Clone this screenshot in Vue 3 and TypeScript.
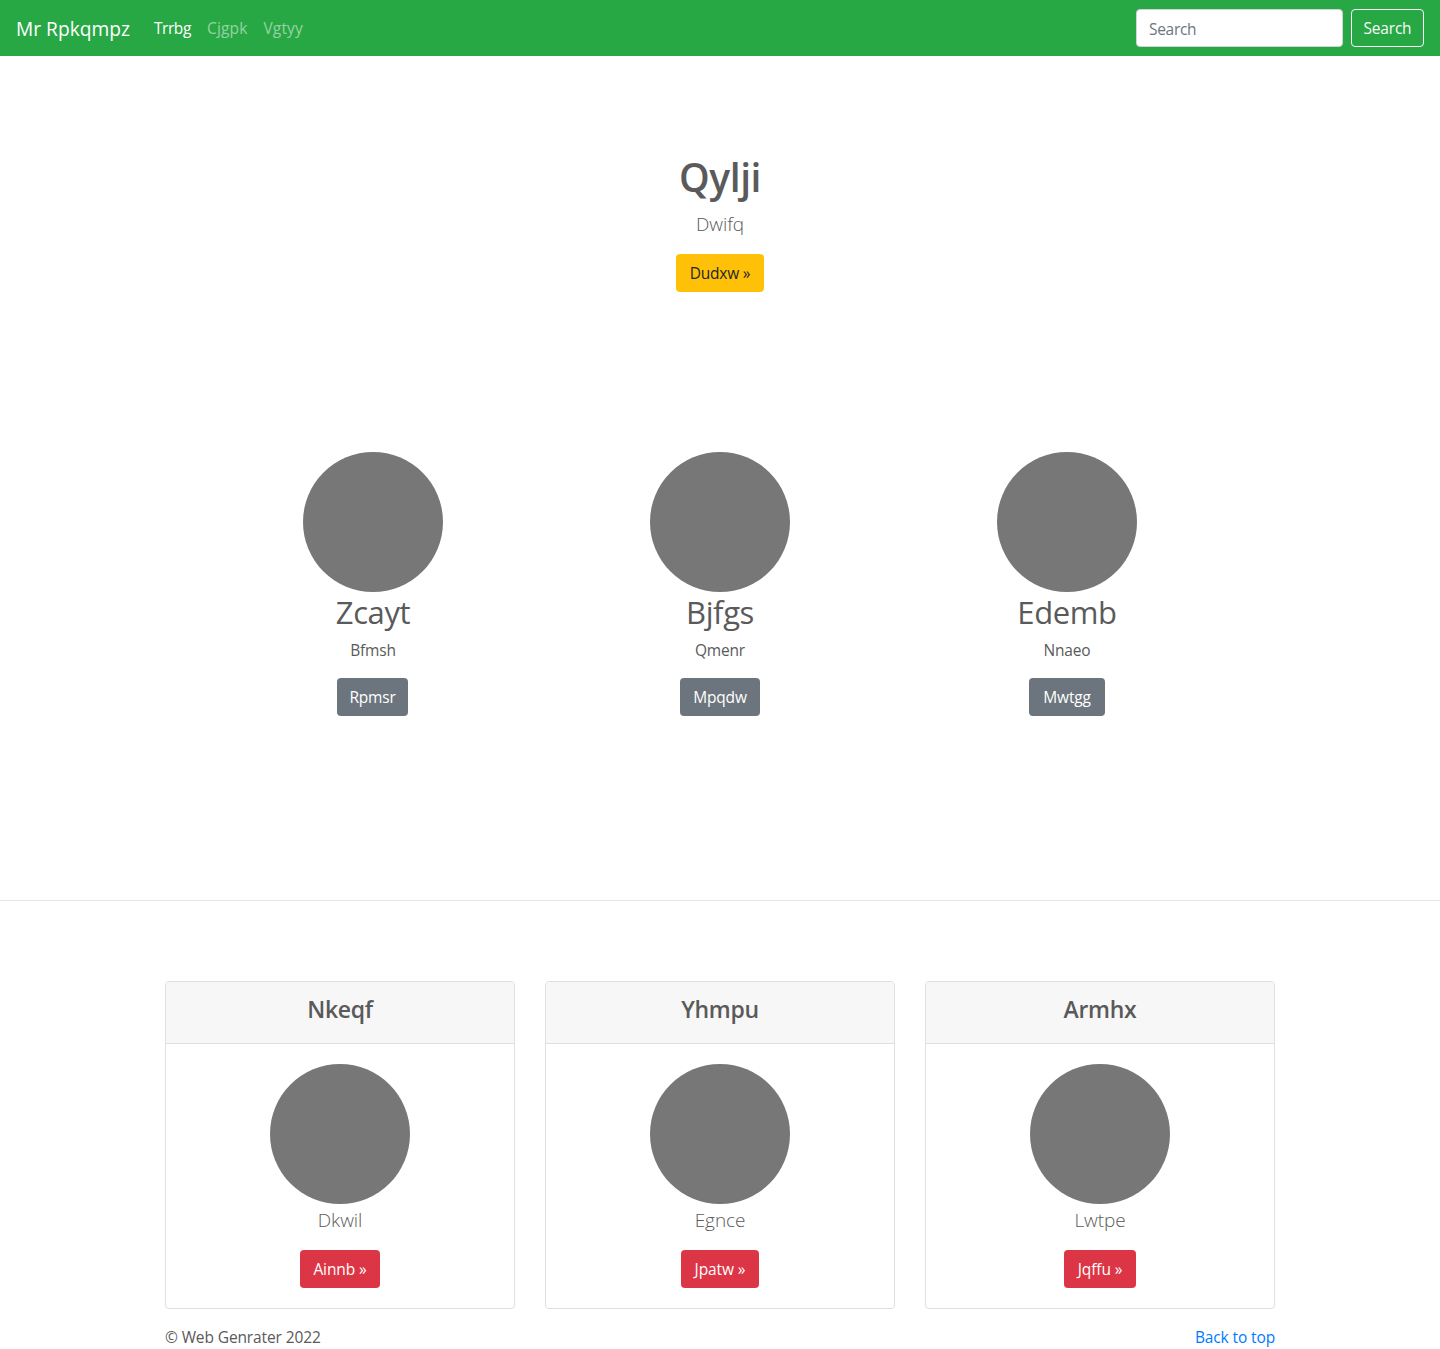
<script setup lang="ts">
interface Item {
  title: string
  text: string
  action: string
  width: number
}

const features: Item[] = [
  { title: 'Zcayt', text: 'Bfmsh', action: 'Rpmsr', width: 71 },
  { title: 'Bjfgs', text: 'Qmenr', action: 'Mpqdw', width: 80 },
  { title: 'Edemb', text: 'Nnaeo', action: 'Mwtgg', width: 76 },
]

const cards: Item[] = [
  { title: 'Nkeqf', text: 'Dkwil', action: 'Ainnb »', width: 80 },
  { title: 'Yhmpu', text: 'Egnce', action: 'Jpatw »', width: 78 },
  { title: 'Armhx', text: 'Lwtpe', action: 'Jqffu »', width: 72 },
]
</script>

<template>
  <div class="page">
    <nav class="navbar">
      <a class="brand">Mr Rpkqmpz</a>
      <ul class="links">
        <li class="active">Trrbg</li>
        <li>Cjgpk</li>
        <li>Vgtyy</li>
      </ul>
      <form class="search" @submit.prevent>
        <input type="text" placeholder="Search" aria-label="Search" />
        <button class="btn outline" type="submit">Search</button>
      </form>
    </nav>

    <section class="hero">
      <h1>Qylji</h1>
      <p class="lead">Dwifq</p>
      <a class="btn warning">Dudxw »</a>
    </section>

    <section class="features">
      <div v-for="f in features" :key="f.title" class="feature">
        <div class="circle"></div>
        <h2>{{ f.title }}</h2>
        <p>{{ f.text }}</p>
        <a class="btn secondary" :style="{ width: f.width + 'px' }">{{ f.action }}</a>
      </div>
    </section>

    <hr />

    <section class="cards">
      <article v-for="c in cards" :key="c.title" class="card">
        <header><h4>{{ c.title }}</h4></header>
        <div class="body">
          <div class="circle"></div>
          <p class="lead">{{ c.text }}</p>
          <a class="btn danger" :style="{ width: c.width + 'px' }">{{ c.action }}</a>
        </div>
      </article>
    </section>

    <footer class="footer">
      <span class="copy">© Web Genrater 2022</span>
      <a class="top">Back to top</a>
    </footer>
  </div>
</template>

<style>
body {
  margin: 0;
  background: #fff;
}
</style>

<style scoped>
* {
  box-sizing: border-box;
}
.page {
  height: 1349px;
  overflow: hidden;
  font-family: 'Segoe UI', 'Open Sans', 'Noto Sans', sans-serif;
  font-size: 15.5px;
  line-height: 24px;
  letter-spacing: -0.2px;
  color: #5a5a5a;
}
h1,
h2,
h4,
p,
ul {
  margin: 0;
  padding: 0;
}
.navbar {
  display: flex;
  align-items: center;
  height: 56px;
  padding: 0 16px;
  background: #28a745;
  color: #fff;
}
.brand {
  width: 114px;
  margin-right: 16px;
  padding-top: 1px;
  font-size: 19.2px;
  line-height: 30px;
  letter-spacing: 0;
  white-space: nowrap;
}
.links {
  display: flex;
  list-style: none;
  color: rgba(255, 255, 255, 0.5);
}
.links li {
  padding: 0 8px;
  letter-spacing: 0.15px;
}
.links .active {
  width: 53px;
  letter-spacing: -0.45px;
  color: #fff;
}
.search {
  display: flex;
  gap: 8px;
  margin-left: auto;
}
.search input {
  width: 207px;
  height: 38px;
  padding: 7px 12px 5px;
  border: 1px solid #ced4da;
  border-radius: 4px;
  background: #fff;
  font: inherit;
  letter-spacing: -0.3px;
}
.search input::placeholder {
  color: #6c757d;
  opacity: 1;
}
.btn {
  display: flex;
  justify-content: center;
  align-items: center;
  height: 38px;
  border: 0;
  border-radius: 4px;
  font: inherit;
  letter-spacing: inherit;
  color: #fff;
  white-space: nowrap;
}
.outline {
  width: 73px;
  padding: 0;
  border: 1px solid #f8f9fa;
  background: transparent;
  color: #f8f9fa;
}
.warning {
  width: 88px;
  background: #ffc107;
  color: #212529;
}
.secondary {
  background: #6c757d;
}
.danger {
  background: #dc3545;
  letter-spacing: -0.1px;
}
.hero {
  display: flex;
  flex-direction: column;
  align-items: center;
  height: 396px;
  padding-top: 96px;
}
h1 {
  height: 48px;
  margin-bottom: 8px;
  font-size: 39px;
  font-weight: 600;
  line-height: 50px;
  letter-spacing: -0.4px;
}
.lead {
  height: 30px;
  margin-bottom: 16px;
  font-size: 19px;
  font-weight: 300;
  line-height: 32px;
  letter-spacing: -0.1px;
}
.features {
  display: flex;
  width: 1041px;
  height: 448px;
  margin: 0 auto;
}
.feature {
  display: flex;
  flex: 1;
  flex-direction: column;
  align-items: center;
}
.feature:first-child .btn {
  margin-right: 1px;
}
.circle {
  flex: none;
  width: 140px;
  height: 140px;
  border-radius: 50%;
  background: #777;
}
h2 {
  height: 38.4px;
  margin-bottom: 8px;
  font-size: 31px;
  font-weight: 400;
  line-height: 40px;
  letter-spacing: -0.4px;
}
.feature p {
  height: 24px;
  margin-bottom: 16px;
}
hr {
  height: 1px;
  margin: 0 0 80px;
  border: 0;
  background: rgba(0, 0, 0, 0.1);
}
.cards {
  display: flex;
  gap: 30px;
  width: 1110px;
  margin: 0 auto 16px;
}
.card {
  flex: 1;
  height: 328px;
  border: 1px solid #dfdfdf;
  border-radius: 4px;
}
.card header {
  height: 62px;
  padding-top: 12px;
  border-bottom: 1px solid #dfdfdf;
  border-radius: 3px 3px 0 0;
  background: #f7f7f7;
  text-align: center;
}
h4 {
  font-size: 23px;
  font-weight: 600;
  line-height: 30px;
  letter-spacing: -0.3px;
}
.body {
  display: flex;
  flex-direction: column;
  align-items: center;
  padding: 20px;
}
.footer {
  display: flex;
  justify-content: space-between;
  width: 1110px;
  margin: 0 auto;
  letter-spacing: -0.12px;
}
.top {
  color: #007bff;
}
</style>
